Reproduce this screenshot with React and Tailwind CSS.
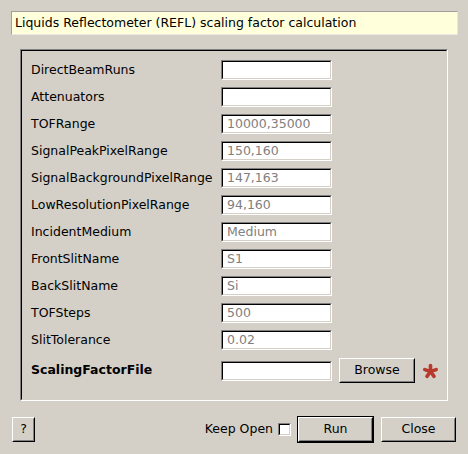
const fields = [
  ["DirectBeamRuns", ""],
  ["Attenuators", ""],
  ["TOFRange", "10000,35000"],
  ["SignalPeakPixelRange", "150,160"],
  ["SignalBackgroundPixelRange", "147,163"],
  ["LowResolutionPixelRange", "94,160"],
  ["IncidentMedium", "Medium"],
  ["FrontSlitName", "S1"],
  ["BackSlitName", "Si"],
  ["TOFSteps", "500"],
  ["SlitTolerance", "0.02"],
]

function Sunken({ value, className = "" }) {
  return (
    <div className={"h-5 border border-t-[#808080] border-l-[#808080] border-b-white border-r-white " + className}>
      <div className="h-full border border-t-black border-l-black border-b-[#d4d0c8] border-r-[#d4d0c8] bg-white pl-[4px] text-[#808080] text-[12.5px] leading-[16px]">
        {value}
      </div>
    </div>
  )
}

function Button({ children, className = "" }) {
  return (
    <div className={"border border-t-white border-l-white border-b-black border-r-black " + className}>
      <div className="h-full flex items-center justify-center border border-t-[#d4d0c8] border-l-[#d4d0c8] border-b-[#808080] border-r-[#808080] text-black">
        {children}
      </div>
    </div>
  )
}

function Star() {
  const arms = [-90, -18, 54, 126, 198]
  return (
    <svg width="17" height="16" viewBox="0 0 17 16" className="ml-[7px]">
      {arms.map((a) => {
        const r = (a * Math.PI) / 180
        return (
          <line key={a} x1="8.5" y1="8.5" x2={8.5 + 6 * Math.cos(r)} y2={8.5 + 6 * Math.sin(r)}
            stroke="#b83a2c" strokeWidth="3.6" strokeLinecap="round" />
        )
      })}
    </svg>
  )
}

export default function App() {
  return (
    <div className="w-[468px] h-[454px] bg-[#d4d0c8] font-['DejaVu_Sans',sans-serif] text-[12.5px] text-black flex flex-col overflow-hidden">
      {/* title */}
      <div className="mt-[11px] ml-[11px] w-[447px] h-[24px] border border-t-[#a0a0a0] border-l-[#a0a0a0] border-b-[#e8e8e0] border-r-[#e8e8e0] bg-[#ffffdc] pl-[3px] flex items-center">
        Liquids Reflectometer (REFL) scaling factor calculation
      </div>

      {/* group box */}
      <div className="mt-[14px] ml-[20px] w-[428px] h-[352px] border border-t-[#808080] border-l-[#808080] border-b-white border-r-white">
        <div className="h-full border border-t-black border-l-black border-b-[#d4d0c8] border-r-[#d4d0c8] pl-[9px] pt-[9px]">
          <div className="flex flex-col gap-[7px]">
            {fields.map(([label, value]) => (
              <div key={label} className="flex items-center h-5">
                <div className="w-[190px] whitespace-nowrap">{label}</div>
                <Sunken value={value} className="w-[111px]" />
              </div>
            ))}
          </div>
          <div className="flex items-center h-[25px] mt-[8px]">
            <div className="w-[190px] font-bold">ScalingFactorFile</div>
            <Sunken value="" className="w-[111px]" />
            <Button className="ml-[7px] w-[76px] h-[25px]">Browse</Button>
            <Star />
          </div>
        </div>
      </div>

      {/* bottom bar */}
      <div className="mt-[15px] flex items-center pl-[12px] pr-[12px]">
        <Button className="w-[23px] h-[25px]">?</Button>
        <div className="flex-1" />
        <span>Keep Open</span>
        <div className="ml-[5px] w-[13px] h-[13px] border border-t-[#808080] border-l-[#808080] border-b-white border-r-white">
          <div className="h-full border border-t-black border-l-black border-b-[#d4d0c8] border-r-[#d4d0c8] bg-white" />
        </div>
        <div className="ml-[6px] w-[77px] h-[27px] border border-black">
          <Button className="w-full h-full">Run</Button>
        </div>
        <Button className="ml-[7px] w-[75px] h-[25px]">Close</Button>
      </div>
    </div>
  )
}
